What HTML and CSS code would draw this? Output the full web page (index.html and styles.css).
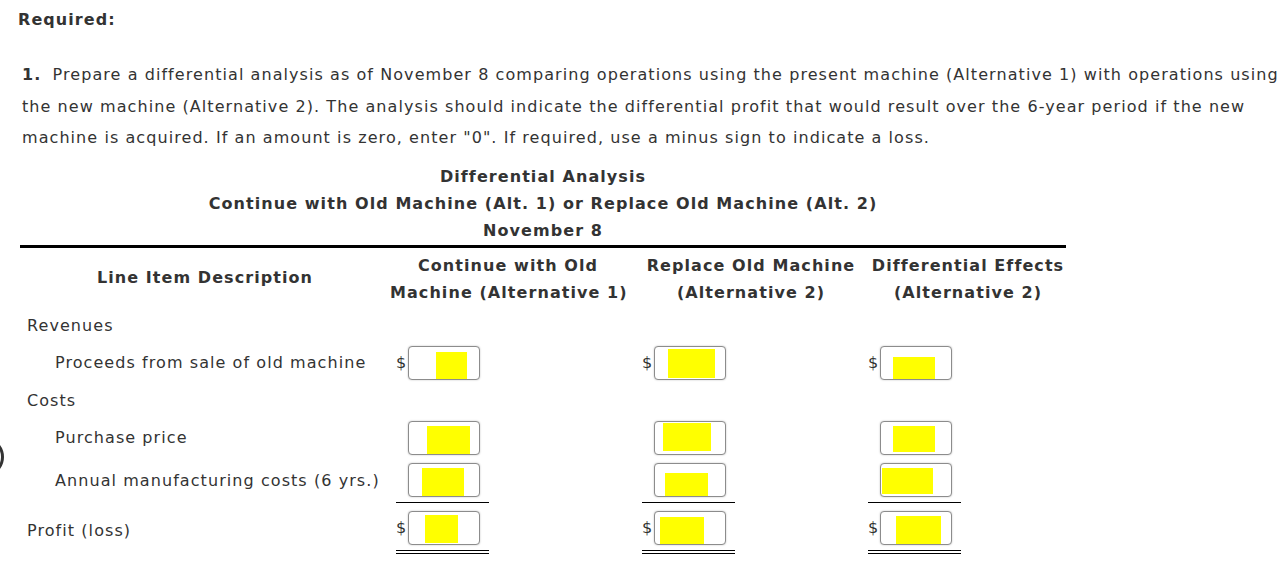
FILE: index.html
```html
<!DOCTYPE html>
<html>
<head>
<meta charset="utf-8">
<link rel="stylesheet" href="styles.css">
</head>
<body>
<div class="page">
  <div class="nav-circle"></div>
  <h2 class="req">Required:</h2>
  <p class="instr"><b class="num">1.</b> Prepare a differential analysis as of November 8 comparing operations using the present machine (Alternative 1) with operations using the new machine (Alternative 2). The analysis should indicate the differential profit that would result over the 6-year period if the new machine is acquired. If an amount is zero, enter "0". If required, use a minus sign to indicate a loss.</p>

  <div class="sheet">
    <div class="title">
      <div>Differential Analysis</div>
      <div>Continue with Old Machine (Alt. 1) or Replace Old Machine (Alt. 2)</div>
      <div>November 8</div>
    </div>

    <div class="row hdr">
      <div class="h-label">Line Item Description</div>
      <div class="h-col h-c2">Continue with Old<br>Machine (Alternative 1)</div>
      <div class="h-col h-c3">Replace Old Machine<br>(Alternative 2)</div>
      <div class="h-col h-c4">Differential Effects<br>(Alternative 2)</div>
    </div>

    <div class="row r-rev">
      <div class="lbl">Revenues</div>
    </div>

    <div class="row r-pro">
      <div class="lbl ind">Proceeds from sale of old machine</div>
      <div class="amt"><div class="box"><span class="cur">$</span><div class="inp"><span class="hl" style="margin-left:27px;margin-top:5px;width:31px;height:27px"></span></div></div></div>
      <div class="amt"><div class="box"><span class="cur">$</span><div class="inp"><span class="hl" style="margin-left:13px;margin-top:2px;width:47px;height:29px"></span></div></div></div>
      <div class="amt"><div class="box"><span class="cur">$</span><div class="inp"><span class="hl" style="margin-left:12px;margin-top:10px;width:42px;height:24px"></span></div></div></div>
    </div>

    <div class="row r-cost">
      <div class="lbl">Costs</div>
    </div>

    <div class="row r-pur">
      <div class="lbl ind">Purchase price</div>
      <div class="amt"><div class="box"><span class="cur"></span><div class="inp"><span class="hl" style="margin-left:18px;margin-top:4px;width:43px;height:29px"></span></div></div></div>
      <div class="amt"><div class="box"><span class="cur"></span><div class="inp"><span class="hl" style="margin-left:8px;margin-top:1px;width:48px;height:28px"></span></div></div></div>
      <div class="amt"><div class="box"><span class="cur"></span><div class="inp"><span class="hl" style="margin-left:12px;margin-top:4px;width:42px;height:26px"></span></div></div></div>
    </div>

    <div class="row r-ann">
      <div class="lbl ind">Annual manufacturing costs (6 yrs.)</div>
      <div class="amt"><div class="box under"><span class="cur"></span><div class="inp"><span class="hl" style="margin-left:13px;margin-top:4px;width:42px;height:28px"></span></div></div></div>
      <div class="amt"><div class="box under"><span class="cur"></span><div class="inp"><span class="hl" style="margin-left:10px;margin-top:9px;width:43px;height:25px"></span></div></div></div>
      <div class="amt"><div class="box under"><span class="cur"></span><div class="inp"><span class="hl" style="margin-left:1px;margin-top:4px;width:51px;height:26px"></span></div></div></div>
    </div>

    <div class="row r-profit">
      <div class="lbl">Profit (loss)</div>
      <div class="amt"><div class="box dbl"><span class="cur">$</span><div class="inp"><span class="hl" style="margin-left:16px;margin-top:3px;width:33px;height:28px"></span></div></div></div>
      <div class="amt"><div class="box dbl"><span class="cur">$</span><div class="inp"><span class="hl" style="margin-left:5px;margin-top:5px;width:44px;height:28px"></span></div></div></div>
      <div class="amt"><div class="box dbl"><span class="cur">$</span><div class="inp"><span class="hl" style="margin-left:15px;margin-top:4px;width:45px;height:29px"></span></div></div></div>
    </div>
  </div>
</div>
</body>
</html>
```

FILE: styles.css
```css
* { box-sizing: border-box; }
html, body { margin: 0; padding: 0; background: #fff; }
body {
  font-family: "DejaVu Sans", Verdana, sans-serif;
  font-size: 16px;
  letter-spacing: 1.07px;
  color: #333;
}
.page {
  position: relative;
  padding: 8px 0 0 18px;
  width: 1287px;
  height: 581px;
  overflow: hidden;
}
.nav-circle {
  position: absolute;
  left: -36px;
  top: 437px;
  width: 40px;
  height: 40px;
  border: 3px solid #333;
  border-radius: 50%;
}
.req {
  margin: 0;
  font-size: 16px;
  font-weight: bold;
  line-height: 24px;
}
.instr {
  margin: 27px 0 0 4px;
  line-height: 31.5px;
  width: 1265px;
}
.num { font-weight: bold; margin-right: 5px; }
.sheet {
  margin: 9px 0 0 2px;
  width: 1046px;
}
.title {
  text-align: center;
  font-weight: bold;
  line-height: 27px;
  padding-bottom: 1px;
  border-bottom: 3px solid #000;
}
.row {
  display: grid;
  grid-template-columns: 370px 246px 226px 204px;
  align-items: center;
}
.hdr {
  height: 59px;
  font-weight: bold;
  line-height: 27px;
}
.h-label { text-align: center; }
.h-col { text-align: center; align-self: start; padding-top: 4px; white-space: nowrap; }
.h-c2 { padding-right: 10px; }
.h-c3 { padding-left: 4px; }
.h-c4 { padding-left: 8px; }
.lbl { padding-left: 7px; white-space: nowrap; }
.lbl.ind { padding-left: 35px; }
.r-rev { height: 37px; }
.r-pro { height: 38px; }
.r-cost { height: 38px; }
.r-pur { height: 36px; }
.r-ann { height: 48px; align-items: start; }
.r-ann .lbl { margin-top: 15px; }
.r-profit { height: 60px; align-items: start; }
.r-profit .lbl { margin-top: 17px; }
.amt { padding-left: 6px; }
.box {
  width: 93px;
  display: flex;
  align-items: center;
}
.r-ann .box { margin-top: 7px; }
.r-profit .box { margin-top: 7px; }
.box.under { padding-bottom: 5px; border-bottom: 1px solid #000; }
.box.dbl { padding-bottom: 5px; border-bottom: 4px double #000; }
.cur {
  width: 12px;
  padding-right: 2px;
  text-align: right;
  font-size: 16px;
  letter-spacing: 0;
}
.inp {
  width: 72px;
  height: 34px;
  border: 1px solid #8c8c8c;
  border-radius: 4px;
  box-shadow: 0 0 2px rgba(0,0,0,0.25);
  background: #fff;
  display: flex;
  align-items: flex-start;
  overflow: hidden;
}
.hl {
  display: block;
  background: #ffff00;
  flex: none;
}
```
